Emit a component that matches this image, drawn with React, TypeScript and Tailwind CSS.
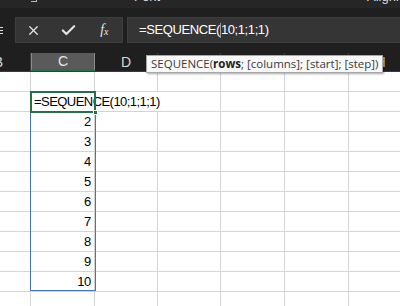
import { X, Check } from 'lucide-react';

const cols = [
  { key: 'B', w: 64 },
  { key: 'C', w: 64 },
  { key: 'D', w: 63 },
  { key: 'E', w: 63 },
  { key: 'F', w: 64 },
  { key: 'G', w: 64 },
  { key: 'H', w: 64 },
];

// row index -> value shown in column C
const values: Record<number, string> = {
  3: '2', 4: '3', 5: '4', 6: '5', 7: '6', 8: '7', 9: '8', 10: '9', 11: '10',
};

export default function App() {
  return (
    <div className="w-[400px] h-[306px] overflow-hidden bg-white font-['Liberation_Sans',sans-serif] relative">
      {/* ribbon bottom edge */}
      <div className="h-[8px] bg-[#262626] overflow-hidden relative text-white">
        <span className="absolute left-[31px] -top-[5px] w-[6px] h-[7px] border-r border-b border-[#bbb]" />
        <span className="absolute left-[134px] -top-[11px] text-[13px] leading-[16px] text-[#ddd]">Font</span>
        <span className="absolute left-[367px] -top-[11px] text-[13px] leading-[16px] text-[#ddd]">Alignm</span>
      </div>

      {/* formula bar */}
      <div className="h-[45px] bg-[#1f1f1f] flex items-start pt-[9px]">
        <div className="w-[15px] h-[26px] flex flex-col justify-center gap-[2px]">
          <span className="w-[3px] h-[1px] bg-[#ddd]" />
          <span className="w-[3px] h-[1px] bg-[#ddd]" />
          <span className="w-[3px] h-[1px] bg-[#ddd]" />
        </div>
        <div className="w-[108px] h-[26px] bg-[#353535] border border-[#3e3e3e] flex items-center">
          <div className="w-[36px] flex justify-center">
            <X size={15} strokeWidth={2} className="text-[#e5e5e5]" />
          </div>
          <div className="w-[36px] flex justify-center">
            <Check size={17} strokeWidth={3} className="text-[#e5e5e5]" />
          </div>
          <div className="w-[36px] flex justify-center font-['Liberation_Serif',serif] italic text-[#e5e5e5] text-[14px] leading-none">
            f<span className="text-[10px] mt-[4px]">x</span>
          </div>
        </div>
        <div className="ml-[4px] flex-1 h-[26px] bg-[#353535] border-y border-l border-[#3e3e3e] flex items-center pl-[11px] text-[13px] tracking-[-0.4px] text-white">
          <span>=SEQUENCE(</span>
          <span className="w-[1px] h-[15px] bg-[#9a9a9a]" />
          <span>10;1;1;1)</span>
        </div>
      </div>

      {/* column headers */}
      <div className="h-[19px] bg-[#1f1f1f] flex -ml-[33px] border-b border-[#3a3a3a]">
        {cols.map((c) => (
          <div
            key={c.key}
            style={{ width: c.w }}
            className={
              c.key === 'C'
                ? 'shrink-0 h-full flex items-center justify-center text-[14px] text-[#e8e8e8] bg-[#5a5a5a] border-x border-[#8a8a8a] border-b-2 border-b-[#217346]'
                : 'shrink-0 h-full flex items-center justify-center text-[14px] text-[#d8d8d8] border-r border-[#3a3a3a]'
            }
          >
            {c.key}
          </div>
        ))}
      </div>

      {/* grid */}
      <div className="flex flex-col -ml-[33px]">
        {Array.from({ length: 12 }, (_, i) => i + 1).map((r) => (
          <div key={r} className="h-[20px] flex shrink-0">
            {cols.map((c) => (
              <div
                key={c.key}
                style={{ width: c.w }}
                className="shrink-0 h-full border-r border-b border-[#d4d4d4] flex items-center justify-end pr-[3px] text-[13px] tracking-[-0.3px] text-black relative"
              >
                {c.key === 'C' && values[r]}
                {c.key === 'C' && r === 2 && (
                  <span className="absolute left-0 top-0 z-10 h-full pl-[3px] pr-[4px] bg-white flex items-center whitespace-nowrap tracking-[-0.55px]">
                    =SEQUENCE(10;1;1;1)
                  </span>
                )}
              </div>
            ))}
          </div>
        ))}
      </div>

      {/* spill range outline */}
      <div className="absolute z-20 left-[30px] top-[92px] w-[66px] h-[199px] border border-[#4472c4] pointer-events-none" />
      {/* active cell */}
      <div className="absolute z-20 left-[30px] top-[91px] w-[66px] h-[22px] border-2 border-[#217346] pointer-events-none" />
      <div className="absolute z-20 left-[93px] top-[110px] w-[5px] h-[5px] bg-[#217346] border border-white pointer-events-none" />

      {/* function tooltip */}
      <div className="absolute z-30 left-[146px] top-[55px] w-[237px] h-[18px] bg-[#f8f8f8] border border-[#a8a8a8] shadow-[1px_1px_2px_rgba(0,0,0,0.35)] flex items-center pl-[4px] text-[11.5px] text-[#3b3b3b] font-['Open_Sans',sans-serif] whitespace-nowrap">
        SEQUENCE(<b className="font-bold text-[#222]">rows</b>; [columns]; [start]; [step])
      </div>
    </div>
  );
}
